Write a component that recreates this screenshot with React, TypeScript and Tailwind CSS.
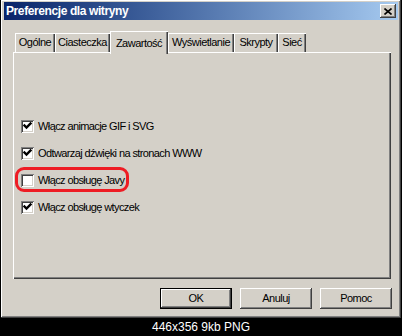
import type { ReactNode } from 'react';

const raised =
  'shadow-[inset_-1px_-1px_#404040,inset_1px_1px_#ffffff,inset_-2px_-2px_#808080,inset_2px_2px_#d4d0c8]';

const tabs = [
  { label: 'Ogólne', w: 'w-[40px]' },
  { label: 'Ciasteczka', w: 'w-[55px]' },
  { label: 'Zawartość', w: 'w-[58px]', active: true },
  { label: 'Wyświetlanie', w: 'w-[66px]' },
  { label: 'Skrypty', w: 'w-[44px]' },
  { label: 'Sieć', w: 'w-[28px]' },
];

const options = [
  { label: 'Włącz animacje GIF i SVG', checked: true },
  { label: 'Odtwarzaj dźwięki na stronach WWW', checked: true },
  { label: 'Włącz obsługę Javy', checked: false },
  { label: 'Włącz obsługę wtyczek', checked: true },
];

function Checkbox({ checked }: { checked: boolean }) {
  return (
    <div className="w-[13px] h-[13px] bg-white shrink-0 shadow-[inset_1px_1px_#808080,inset_-1px_-1px_#ffffff,inset_2px_2px_#404040,inset_-2px_-2px_#d4d0c8]">
      {checked && (
        <svg width="13" height="13" viewBox="0 0 13 13">
          <path d="M3.5 5.5 L5.5 7.5 L9.5 3.5" fill="none" stroke="#000" strokeWidth="2.4" strokeLinecap="square" />
        </svg>
      )}
    </div>
  );
}

function Button({ children, isDefault }: { children: ReactNode; isDefault?: boolean }) {
  return (
    <div
      className={
        'w-[72px] h-[21px] flex items-center justify-center text-[11px] tracking-[-0.5px] text-black ' +
        (isDefault
          ? 'shadow-[inset_0_0_0_1px_#000000,inset_-2px_-2px_#404040,inset_2px_2px_#ffffff,inset_-3px_-3px_#808080]'
          : raised)
      }
    >
      {children}
    </div>
  );
}

export default function App() {
  return (
    <div className="w-[402px] h-[336px] bg-black flex flex-col font-['Liberation_Sans',Arial,sans-serif]">
      <div className={'ml-px w-[400px] h-[320px] bg-[#d4d0c8] px-[3px] pt-[2px] pb-[3px] flex flex-col ' + raised}>
        <div className="h-[18px] flex items-center justify-between pl-[2px] pr-[2px] bg-gradient-to-r from-[#0a246a] to-[#a6caf0]">
          <span className="text-white font-bold text-[12px] tracking-[-0.4px] leading-none">Preferencje dla witryny</span>
          <div className={'w-[16px] h-[14px] bg-[#d4d0c8] flex items-center justify-center ' + raised}>
            <svg width="8" height="7" viewBox="0 0 8 7">
              <path d="M0.5 0.5 L7.5 6.5 M7.5 0.5 L0.5 6.5" stroke="#000" strokeWidth="1.6" />
            </svg>
          </div>
        </div>

        <div className="flex flex-col pl-[9px] pr-[6px] mt-[11px]">
          <div className="flex items-end pl-[2px] h-[21px] relative z-10">
            {tabs.map((t) =>
              t.active ? (
                <div
                  key={t.label}
                  className={
                    t.w +
                    ' h-[23px] -mb-[2px] bg-[#d4d0c8] flex items-start justify-center pt-[4px] text-[11px] tracking-[-0.5px] text-black shadow-[inset_1px_1px_#ffffff,inset_-1px_0_#404040,inset_-2px_0_#808080]'
                  }
                >
                  {t.label}
                </div>
              ) : (
                <div
                  key={t.label}
                  className={
                    t.w +
                    ' h-[19px] flex items-center justify-center text-[11px] tracking-[-0.5px] text-black shadow-[inset_1px_1px_#ffffff,inset_-1px_0_#404040,inset_-2px_0_#808080]'
                  }
                >
                  {t.label}
                </div>
              )
            )}
          </div>

          <div className="relative h-[227px] w-[378px] shadow-[inset_1px_1px_#ffffff,inset_-1px_-1px_#404040,inset_-2px_-2px_#808080] pt-[68px] pl-[8px] flex flex-col gap-[14px]">
            {options.map((o) => (
              <div key={o.label} className="flex items-center gap-[4px] h-[13px]">
                <Checkbox checked={o.checked} />
                <span className="text-[11px] tracking-[-0.6px] text-black leading-none">{o.label}</span>
              </div>
            ))}
            <div className="absolute left-[2px] top-[115px] w-[114px] h-[25px] rounded-[9px] border-[3px] border-[#ee1c24]" />
          </div>

          <div className="flex justify-end gap-[8px] mt-[9px]">
            <Button isDefault>OK</Button>
            <Button>Anuluj</Button>
            <Button>Pomoc</Button>
          </div>
        </div>
      </div>
      <div className="flex-1 flex items-center justify-center text-white text-[12px]">446x356 9kb PNG</div>
    </div>
  );
}
